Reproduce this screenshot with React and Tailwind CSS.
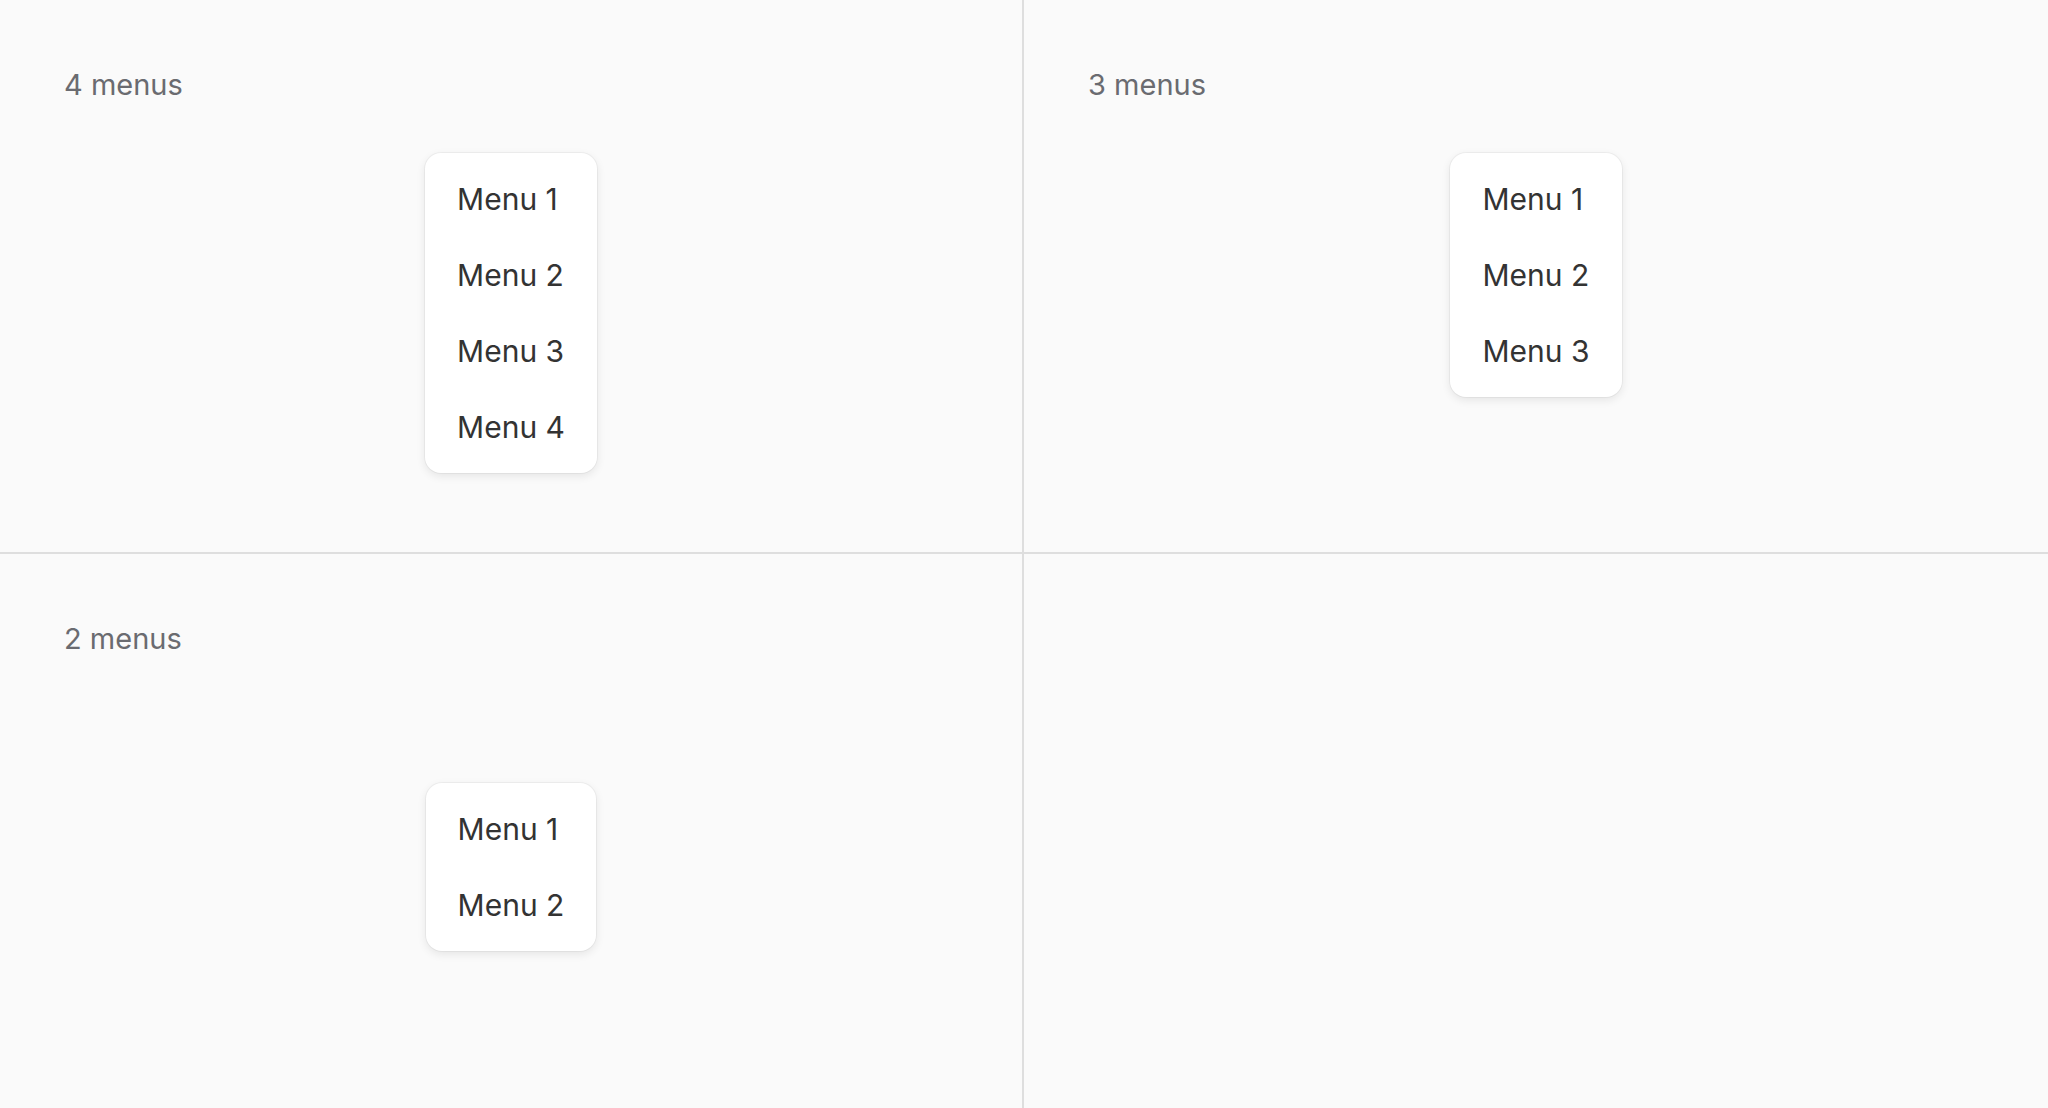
import React from "react";

function Menu({ items }) {
  return (
    <div className="inline-flex flex-col self-center rounded-[16px] bg-white py-2 px-8 shadow-[0_0_0_1px_rgba(0,0,0,0.04),0_3px_10px_rgba(0,0,0,0.09)]">
      {items.map((t) => (
        <div key={t} className="h-[76px] flex items-center text-[30px] leading-none text-[#333333]">
          {t}
        </div>
      ))}
    </div>
  );
}

function Panel({ label, count, offset, className }) {
  const items = Array.from({ length: count }, (_, i) => `Menu ${i + 1}`);
  return (
    <div className={`flex flex-col bg-[#fafafa] p-16 ${className}`}>
      {label && <div className="text-[29px] leading-[42px] text-[#6a6b70]">{label}</div>}
      {count > 0 && (
        <div className={`flex justify-center ${offset}`}>
          <Menu items={items} />
        </div>
      )}
    </div>
  );
}

export default function App() {
  return (
    <div
      className="grid grid-cols-2 grid-rows-2 w-[2048px] h-[1108px] bg-[#fafafa] overflow-hidden"
      style={{ fontFamily: "Inter, 'Noto Sans', sans-serif" }}
    >
      <Panel label="4 menus" count={4} offset="mt-[47px]" className="border-r-2 border-b-2 border-[#dedede]" />
      <Panel label="3 menus" count={3} offset="mt-[47px]" className="border-b-2 border-[#dedede]" />
      <Panel label="2 menus" count={2} offset="mt-[123px]" className="border-r-2 border-[#dedede]" />
      <Panel label="" count={0} offset="" className="" />
    </div>
  );
}
